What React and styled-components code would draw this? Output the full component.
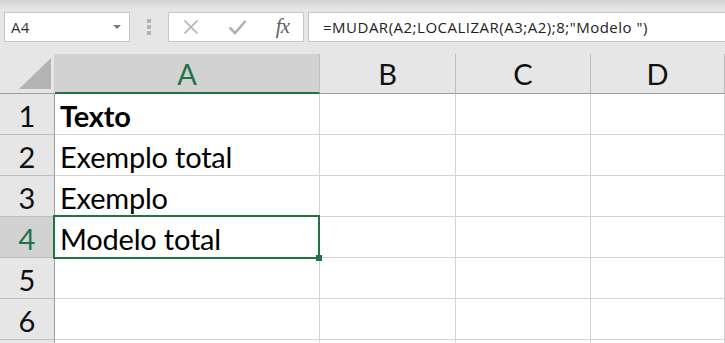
import React from "react";
import styled, { createGlobalStyle } from "styled-components";

const GlobalStyle = createGlobalStyle`
  html, body {
    margin: 0;
    padding: 0;
    background: #e6e6e6;
  }
`;

const Page = styled.div`
  width: 725px;
  height: 343px;
  overflow: hidden;
  background: #e6e6e6;
`;

const FormulaBar = styled.div`
  height: 54px;
  padding: 12px 0 0 4px;
  box-sizing: border-box;
  background: linear-gradient(180deg, #d3d3d3 0px, #e6e6e6 9px, #e6e6e6 100%);

  display: flex;
  align-items: flex-start;
`;

const NameBox = styled.div`
  width: 126px;
  height: 30px;
  padding: 0 8px 0 6px;
  box-sizing: border-box;
  background: #fff;
  border: 1px solid #c6c6c6;

  display: flex;
  align-items: center;
  justify-content: space-between;

  color: #333;
  font-family: "Open Sans", "Noto Sans", sans-serif;
  font-size: 15px;
  letter-spacing: 0.3px;
`;

const Caret = styled.span`
  width: 0;
  height: 0;
  border-left: 4px solid transparent;
  border-right: 4px solid transparent;
  border-top: 4px solid #7a7a7a;
`;

const Grip = styled.div`
  width: 38px;
  height: 30px;

  display: flex;
  flex-direction: column;
  align-items: center;
  justify-content: center;
  gap: 2px;

  span {
    width: 4px;
    height: 4px;
    background: #b3b3b3;
  }
`;

const IconBox = styled.div`
  width: 136px;
  height: 30px;
  padding: 0 14px 0 14px;
  box-sizing: border-box;
  background: #fff;
  border: 1px solid #c6c6c6;

  display: flex;
  align-items: center;
  justify-content: space-between;
`;

const Fx = styled.span`
  color: #606060;
  font-family: "Liberation Serif", "DejaVu Serif", serif;
  font-style: italic;
  font-size: 21px;
  letter-spacing: -1px;
  line-height: 1;
  padding-bottom: 2px;
`;

const FormulaInput = styled.div`
  flex: 1;
  height: 30px;
  margin-left: 4px;
  padding-left: 14px;
  box-sizing: border-box;
  background: #fff;
  border: 1px solid #c6c6c6;
  border-right: none;

  display: flex;
  align-items: center;

  color: #222;
  font-family: "Open Sans", "Noto Sans", sans-serif;
  font-size: 15px;
  letter-spacing: 0.5px;
  white-space: nowrap;
`;

const Sheet = styled.div`
  position: relative;
  display: grid;
  grid-template-columns: 55px 265px 136px 135px 1fr;
  grid-template-rows: 40px repeat(7, 41px);
  background: #fff;

  font-family: Lato, "Open Sans", sans-serif;
  font-size: 29px;
`;

const Corner = styled.div`
  position: relative;
  background: #e6e6e6;
  border-right: 1px solid #d0d0d0;
  border-bottom: 1px solid #9e9e9e;
  box-sizing: border-box;

  &::after {
    content: "";
    position: absolute;
    right: 3px;
    bottom: 4px;
    width: 0;
    height: 0;
    border-left: 32px solid transparent;
    border-bottom: 31px solid #b4b4b4;
  }
`;

const ColHead = styled.div`
  box-sizing: border-box;
  background: ${(p) => (p.$active ? "#d2d2d2" : "#e6e6e6")};
  border-right: 1px solid #bdbdbd;
  border-bottom: ${(p) => (p.$active ? "2px solid #217346" : "1px solid #9e9e9e")};

  display: flex;
  align-items: center;
  justify-content: center;
  padding-bottom: ${(p) => (p.$active ? "0" : "1px")};

  color: ${(p) => (p.$active ? "#217346" : "#111")};
`;

const RowHead = styled.div`
  box-sizing: border-box;
  background: ${(p) => (p.$active ? "#d2d2d2" : "#e6e6e6")};
  border-right: 1px solid #9e9e9e;
  border-bottom: 1px solid #bdbdbd;

  display: flex;
  align-items: flex-end;
  justify-content: center;
  padding-bottom: 4px;
  line-height: 1;

  color: ${(p) => (p.$active ? "#217346" : "#111")};
`;

const Cell = styled.div`
  box-sizing: border-box;
  border-right: 1px solid #d4d4d4;
  border-bottom: 1px solid #d4d4d4;
  padding: 0 0 4px 5px;

  display: flex;
  align-items: flex-end;
  line-height: 1;
  white-space: nowrap;
  letter-spacing: -0.2px;

  color: #000;
  font-weight: ${(p) => (p.$bold ? 700 : 400)};
`;

const Selection = styled.div`
  position: absolute;
  left: 53px;
  top: 161px;
  width: 267px;
  height: 44px;
  box-sizing: border-box;
  border: 2px solid #217346;
  pointer-events: none;
`;

const FillHandle = styled.div`
  position: absolute;
  right: -4px;
  bottom: -4px;
  width: 6px;
  height: 6px;
  background: #217346;
`;

const columns = ["A", "B", "C", "D"];

const rows = [
  { n: 1, a: "Texto", bold: true },
  { n: 2, a: "Exemplo total" },
  { n: 3, a: "Exemplo" },
  { n: 4, a: "Modelo total" },
  { n: 5, a: "" },
  { n: 6, a: "" },
];

const activeRow = 4;
const activeCol = "A";

export default function App() {
  return (
    <Page>
      <GlobalStyle />

      <FormulaBar>
        <NameBox>
          A4
          <Caret />
        </NameBox>

        <Grip>
          <span />
          <span />
          <span />
        </Grip>

        <IconBox>
          <svg width="16" height="16" viewBox="0 0 16 16">
            <path d="M1.5 1.5 L14.5 14.5 M14.5 1.5 L1.5 14.5" stroke="#b0b0b0" strokeWidth="1.6" fill="none" />
          </svg>
          <svg width="19" height="16" viewBox="0 0 19 16">
            <path d="M1.5 8.5 L7 14 L17.5 2" stroke="#b0b0b0" strokeWidth="2.6" fill="none" />
          </svg>
          <Fx>fx</Fx>
        </IconBox>

        <FormulaInput>=MUDAR(A2;LOCALIZAR(A3;A2);8;"Modelo ")</FormulaInput>
      </FormulaBar>

      <Sheet>
        <Corner />
        {columns.map((c) => (
          <ColHead key={c} $active={c === activeCol}>
            {c}
          </ColHead>
        ))}

        {rows.map((r) => (
          <React.Fragment key={r.n}>
            <RowHead $active={r.n === activeRow}>{r.n}</RowHead>
            <Cell $bold={r.bold}>{r.a}</Cell>
            <Cell />
            <Cell />
            <Cell />
          </React.Fragment>
        ))}

        <RowHead />
        <Cell />
        <Cell />
        <Cell />
        <Cell />

        <Selection>
          <FillHandle />
        </Selection>
      </Sheet>
    </Page>
  );
}
